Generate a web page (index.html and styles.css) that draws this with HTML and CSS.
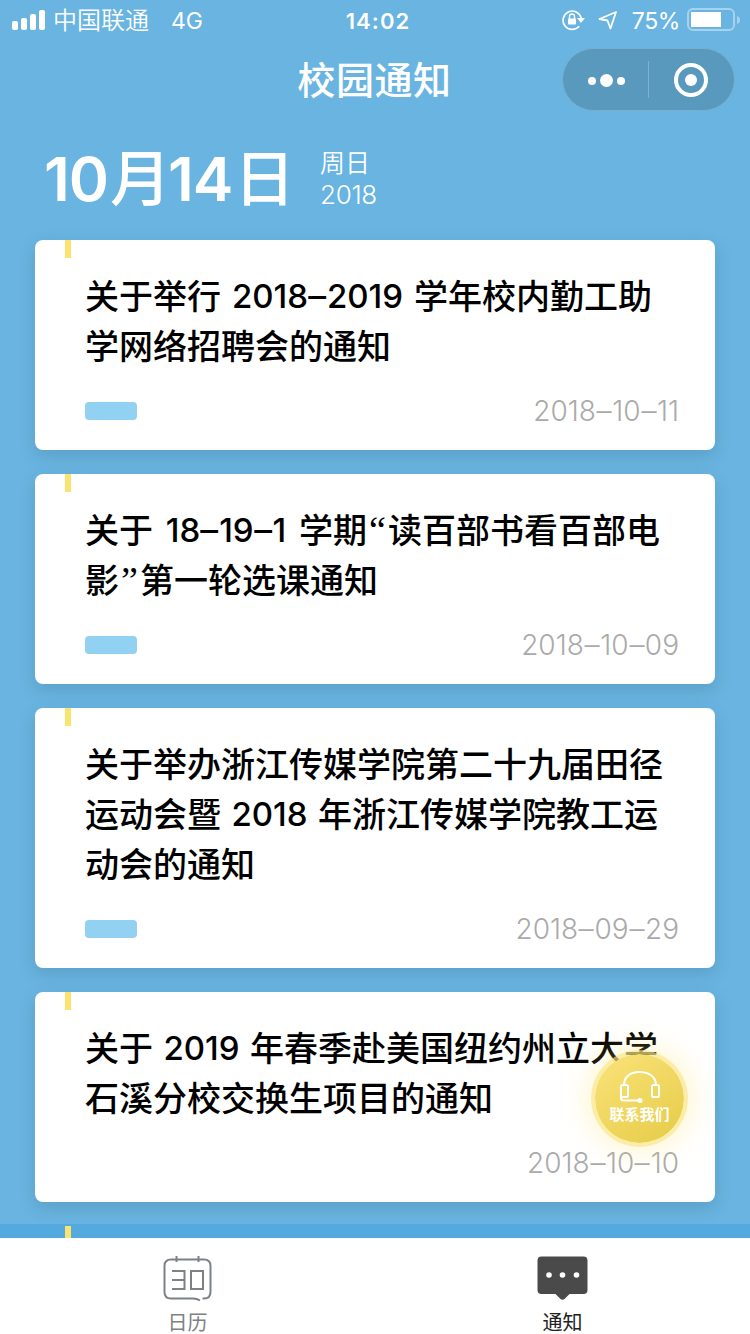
FILE: index.html
```html
<!DOCTYPE html>
<html lang="zh-CN">
<head>
<meta charset="utf-8">
<title>校园通知</title>
<link rel="stylesheet" href="styles.css">
</head>
<body>
<div class="app">
  <header class="status">
    <div class="status-left">
      <svg class="signal" width="34" height="20" viewBox="0 0 34 20" fill="#fff"><rect x="0" y="11" width="6" height="9" rx="2"/><rect x="9" y="8" width="6" height="12" rx="2"/><rect x="18" y="4" width="6" height="16" rx="2"/><rect x="27" y="0" width="6" height="20" rx="2"/></svg>
      <span class="carrier">中国联通</span><span class="network">4G</span>
    </div>
    <span class="clock">14:02</span>
    <div class="status-right">
      <svg class="lock" width="24" height="22" viewBox="0 0 24 22"><path d="M17.2 17.3A9.2 9.2 0 1 1 19.2 9" fill="none" stroke="#fff" stroke-width="1.7"/><path d="M15 9h8l-4 5z" fill="#fff"/><rect x="6" y="9.5" width="8" height="6" rx=".8" fill="#fff"/><path d="M7.5 10V7.5a2.5 2.5 0 0 1 5 0V10" fill="none" stroke="#fff" stroke-width="1.4"/></svg>
      <svg class="arrow" width="20" height="20" viewBox="0 0 20 20"><path d="M18 2 1.500 9 9.500 10.500 12.500 18.500Z" fill="none" stroke="#fff" stroke-width="1.8" stroke-linejoin="round"/></svg>
      <span class="percent">75%</span>
      <svg class="battery" width="54" height="24" viewBox="0 0 54 24"><rect x="1" y="1" width="46" height="21" rx="5" fill="none" stroke="#a5d3ee" stroke-width="2"/><rect x="4" y="4" width="30" height="15" fill="#fff"/><path d="M50 8q3 1 3 4t-3 4z" fill="#a5d3ee"/></svg>
    </div>
  </header>
  <nav class="navbar">
    <h1 class="nav-title">校园通知</h1>
    <div class="capsule">
      <svg width="173" height="64" viewBox="0 0 173 64"><rect x=".5" y=".5" width="172" height="62" rx="31" fill="#5999be" stroke="#78afcf" stroke-width="1"/><g fill="#fff"><circle cx="30" cy="33" r="4"/><circle cx="44.500" cy="32.500" r="6.500"/><circle cx="59" cy="33" r="4"/><circle cx="129" cy="32" r="6"/></g><path d="M86.500 13v37" stroke="#7fb2d0"/><circle cx="129" cy="32" r="15" fill="none" stroke="#fff" stroke-width="4"/></svg>
    </div>
  </nav>
  <section class="today">
    <div class="day"><span class="digits">10</span><span class="unit">月</span><span class="digits">14</span><span class="unit">日</span></div>
    <div class="side"><span>周日</span><span class="year">2018</span></div>
  </section>
  <main class="list">
    <article class="card">
      <h2>关于举行<span class="num w193">2018<b>–</b>2019</span>学年校内勤工助<br>学网络招聘会的通知</h2>
      <footer><i class="tag"></i><time>2018<b>–</b>10<b>–</b>11</time></footer>
    </article>
    <article class="card">
      <h2>关于<span class="num w146">18<b>–</b>19<b>–</b>1</span>学期<span class="quote">“</span>读百部书看百部电<br>影<span class="quote">”</span>第一轮选课通知</h2>
      <footer><i class="tag"></i><time>2018<b>–</b>10<b>–</b>09</time></footer>
    </article>
    <article class="card">
      <h2>关于举办浙江传媒学院第二十九届田径<br>运动会暨<span class="num w97">2018</span>年浙江传媒学院教工运<br>动会的通知</h2>
      <footer><i class="tag"></i><time>2018<b>–</b>09<b>–</b>29</time></footer>
    </article>
    <article class="card">
      <h2>关于<span class="num w97">2019</span>年春季赴美国纽约州立大学<br>石溪分校交换生项目的通知</h2>
      <footer><time>2018<b>–</b>10<b>–</b>10</time></footer>
    </article>
  </main>
  <div class="next"></div>
  <nav class="tabs">
    <div class="tab">
      <svg width="50" height="46" viewBox="0 0 50 46" fill="none" stroke="#7d8185" stroke-width="2"><path d="M30 42.500H8q-6.500 0-6.500-6.500V10q0-6.500 6.500-6.500h33q6.500 0 6.500 6.500v26q0 6.500-6.500 6.500h-1.500M30 42.500q4 0 7 2M13.500 0v6M35.500 0v6M9 15h12.500v18H9M9 24h12.500M28 15h12v18H28z"/></svg>
      <span>日历</span>
    </div>
    <div class="tab active">
      <svg width="52" height="46" viewBox="0 0 52 46"><path d="M4.500 .5h42q4 0 4 4v29.500q0 4-4 4H32.500l-5 5q-2 1.500-4 0L18.500 38h-14q-4 0-4-4V4.500q0-4 4-4z" fill="#4a4a4a"/><g fill="#fff"><circle cx="12" cy="19" r="2.800"/><circle cx="25.500" cy="19" r="2.800"/><circle cx="39.500" cy="19" r="2.800"/></g></svg>
      <span>通知</span>
    </div>
  </nav>
  <div class="contact">
    <svg width="42" height="34" viewBox="0 0 42 34" fill="none" stroke="#fff" stroke-width="2"><path d="M5 15C5 7 11 2 20.500 2S37 7 37 15"/><rect x="2" y="15" width="7" height="12" rx="1.500"/><rect x="33" y="15" width="7" height="12" rx="1.500"/><path d="M2 25v3q0 2.500 2.500 2.500H20"/><circle cx="21" cy="30.500" r="1.500" fill="#fff"/></svg>
    <span>联系我们</span>
  </div>
</div>
</body>
</html>
```
FILE: styles.css
```css
* { box-sizing: border-box; margin: 0; padding: 0; }
body { background: #69b4e0; font-family: Inter, "Noto Sans CJK SC", sans-serif; }
svg { display: block; flex: none; }
.app { position: relative; width: 750px; height: 1334px; overflow: hidden; display: flex; flex-direction: column; background: #69b4e0; color: #fff; }

.status { height: 40px; display: grid; grid-template-columns: 1fr auto 1fr; align-items: center; padding: 0 9px 0 12px; font-size: 22px; }
.status-left, .status-right { display: flex; align-items: center; }
.status-left { font-size: 24px; font-weight: 350; }
.carrier { margin-left: 7px; line-height: 38px; padding-top: 2px; }
.network { margin-left: 22px; font-size: 23px; font-weight: 400; padding-top: 1px; }
.clock { font-weight: 600; font-size: 22px; letter-spacing: 1.1px; padding: 1px 0 0 3px; }
.status-right { justify-content: flex-end; }
.arrow { margin-left: 12px; }
.percent { font-size: 23px; letter-spacing: -.4px; margin: 0 7px 0 14px; padding-top: 1px; }

.navbar { height: 80px; display: grid; grid-template-columns: 187px 1fr 188px; padding-top: 8px; }
.nav-title { grid-column: 2; text-align: center; font-size: 38px; font-weight: 500; line-height: 64px; letter-spacing: .6px; }
.capsule { justify-self: start; }

.today { height: 120px; display: flex; padding: 24px 0 0 44px; }
.day { width: 276px; display: flex; line-height: 70px; white-space: nowrap; font-size: 61px; font-weight: 500; }
.digits { width: 62px; letter-spacing: -1px; font-weight: 580; font-size: 61px; }
.unit { width: 62px; padding-left: 4px; }
.side { display: flex; flex-direction: column; font-size: 25px; font-weight: 350; line-height: 32px; padding-top: 3px; }
.year { font-size: 26px; font-weight: 300; letter-spacing: -.3px; }

.list { flex: none; height: 984px; padding: 0 35px; display: flex; flex-direction: column; gap: 24px; }
.card { background: linear-gradient(#fae36f, #fae36f) 30px 0 / 6px 18px no-repeat #fff; border-radius: 8px; padding: 32px 36px 19px 50px; box-shadow: 0 6px 16px rgba(45, 95, 125, .24); }
.card h2 { color: #000; font-size: 34px; font-weight: 500; line-height: 50px; white-space: nowrap; }
.num { display: inline-block; text-align: center; font-size: 33px; line-height: 48px; vertical-align: 1px; }
.num b, time b { display: inline-block; font-weight: inherit; transform: scaleX(1.08); margin: 0 1.2px; }
.w193 { width: 193px; }
.w146 { width: 146px; }
.w97 { width: 97px; }
.quote { display: inline-block; width: 21px; text-align: center; font-family: "Liberation Serif", serif; font-size: 38px; line-height: 40px; }
.card footer { display: flex; align-items: center; height: 40px; margin-top: 19px; }
.tag { width: 52px; height: 18px; border-radius: 4px; background: #93d1f3; }
.card time { margin-left: auto; color: #aaa; font-size: 28px; font-weight: 320; line-height: 40px; padding-bottom: 1px; }

.next { flex: none; height: 14px; background: linear-gradient(#fae36f, #fae36f) 65px 2px / 6px 12px no-repeat #54aadf; }

.tabs { flex: none; height: 96px; background: #fff; display: grid; grid-template-columns: 1fr 1fr; }
.tab { display: flex; flex-direction: column; align-items: center; padding-top: 18px; font-size: 20px; line-height: 30px; color: #7d8185; }
.tab span { margin-top: 6px; }
.active { color: #222; }

.contact { position: absolute; left: 591px; top: 1050px; width: 97px; height: 97px; border-radius: 50%; border: 4px solid rgba(250, 230, 130, .7); background: linear-gradient(145deg, #fae37a, #e6cb47); background-clip: padding-box; box-shadow: 0 0 32px rgba(250, 227, 111, .45); display: flex; flex-direction: column; align-items: center; padding-top: 16px; font-size: 15px; font-weight: 700; line-height: 22px; }
```
